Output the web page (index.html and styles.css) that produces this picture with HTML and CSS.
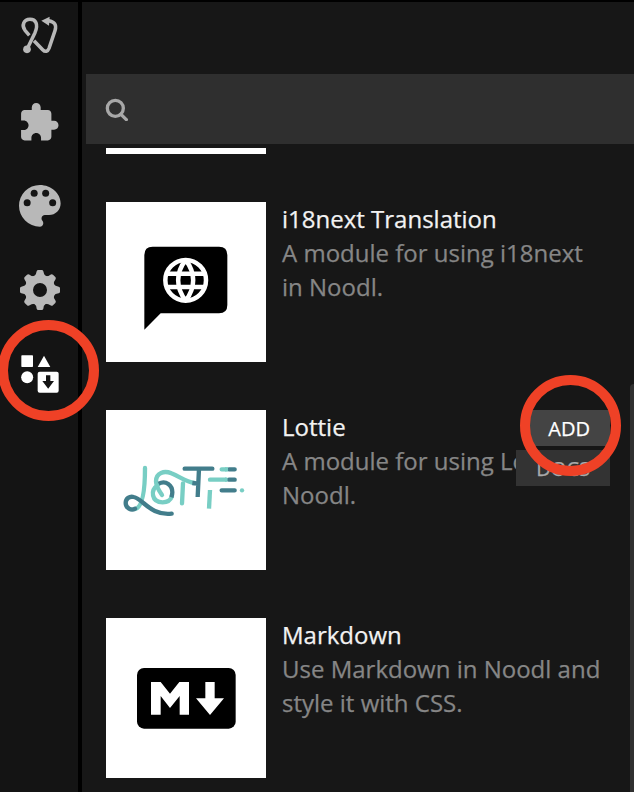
FILE: index.html
```
<!DOCTYPE html>
<html lang="en">
<head>
<meta charset="utf-8">
<title>Modules</title>
<link rel="stylesheet" href="styles.css">
</head>
<body>
<div class="app">
  <nav class="sidebar">
    <svg class="nav-icon nav-logo" viewBox="0 6 234 234">
      <g fill="none" stroke="#b8b8b8" stroke-width="10.500" stroke-linecap="butt" stroke-linejoin="round">
        <path d="M81 148L105 98C116 72 107 58 90 58C71 58 64 76 75 91L88 106"/>
        <path d="M102 122L128 149C136 157 143 155 147 145L165 92C171 73 163 65 146 62"/>
      </g>
      <circle cx="81" cy="148" r="11.5" fill="#b8b8b8"/>
      <path d="M124 62L149 50L147 77Z" fill="#b8b8b8"/>
    </svg>
    <svg class="nav-icon" viewBox="0 240 234 252">
      <path transform="translate(52.500 303.600) scale(5.35)" fill="#b8b8b8" d="M20.5 11H19V7c0-1.1-.9-2-2-2h-4V3.5C13 2.12 11.88 1 10.5 1S8 2.12 8 3.5V5H4c-1.1 0-1.99.9-1.99 2v3.8H3.5c1.49 0 2.7 1.21 2.7 2.7s-1.21 2.7-2.7 2.7H2V20c0 1.1.9 2 2 2h3.8v-1.5c0-1.49 1.21-2.7 2.7-2.7 1.49 0 2.7 1.21 2.7 2.7V22H17c1.1 0 2-.9 2-2v-4h1.5c1.38 0 2.5-1.12 2.5-2.5S21.88 11 20.5 11z"/>
    </svg>
    <svg class="nav-icon" viewBox="0 12 234 252">
      <path transform="translate(36.2 54.2) scale(6.94)" fill="#b8b8b8" d="M12 3a9 9 0 0 0 0 18c.83 0 1.5-.67 1.5-1.5 0-.39-.15-.74-.39-1.01-.23-.26-.38-.61-.38-.99 0-.83.67-1.5 1.5-1.5H16c2.76 0 5-2.24 5-5 0-4.42-4.03-8-9-8z"/>
      <g fill="#141414"><circle cx="81.5" cy="128" r="10.5"/><circle cx="102.5" cy="100" r="10.5"/><circle cx="137" cy="100" r="10.5"/><circle cx="158" cy="128" r="10.5"/></g>
    </svg>
    <svg class="nav-icon" viewBox="0 264 234 252">
      <defs><path id="tooth" d="M-18 -40Q-11 -46 -10 -56Q-9 -60 -5 -60H5Q9 -60 10 -56Q11 -46 18 -40Z"/></defs>
      <g transform="translate(120 390)" fill="#b8b8b8">
        <circle r="33.500" fill="none" stroke="#b8b8b8" stroke-width="25"/>
        <use href="#tooth"/><use href="#tooth" transform="rotate(45)"/><use href="#tooth" transform="rotate(90)"/><use href="#tooth" transform="rotate(135)"/><use href="#tooth" transform="rotate(180)"/><use href="#tooth" transform="rotate(225)"/><use href="#tooth" transform="rotate(270)"/><use href="#tooth" transform="rotate(315)"/>
      </g>
    </svg>
    <svg class="nav-icon" viewBox="0 51 234 252">
      <g fill="#fff">
        <rect x="64" y="121" width="35" height="35" rx="2"/>
        <path d="M132 122L151 156H113Z"/>
        <circle cx="81.5" cy="187" r="18"/>
        <rect x="113" y="170" width="63" height="63" rx="6"/>
      </g>
      <path d="M138 181H151V198H162L144.500 221L127 198H138Z" fill="#141414"/>
    </svg>
  </nav>

  <main class="panel">
    <div class="search">
      <svg class="search-icon" viewBox="315 291 72 72">
        <g fill="none" stroke="#a8a8a8" stroke-width="10"><circle cx="346" cy="325" r="24"/><path d="M363 343L379 359" stroke-linecap="round"/></g>
      </svg>
    </div>
    <div class="list">
      <div class="thumb thumb-cut"></div>

      <article class="item">
        <svg class="thumb" viewBox="18 21 480 480">
          <path d="M133 404V180Q133 155 158 155H357Q382 155 382 180V330Q382 355 357 355H182Z"/>
          <g fill="none" stroke="#fff" stroke-width="13.500" stroke-linejoin="bevel">
            <circle cx="257" cy="256" r="61"/>
            <path d="M202 236H312M202 276H312"/>
            <path d="M257 195C227 233 227 279 257 317C287 279 287 233 257 195Z"/>
          </g>
        </svg>
        <div class="text"><h2>i18next Translation</h2><p>A module for using i18next in Noodl.</p></div>
      </article>

      <article class="item">
        <svg class="thumb" viewBox="18 15 480 480">
          <g fill="none" stroke-width="13" stroke-linecap="round">
            <path stroke="#78cec4" d="M135 189C135 235 131 305 106 312"/>
            <path stroke="#427d8b" d="M105 311C94 318 77 309 77 294C77 280 89 273 101 276C130 282 151 333 215 326"/>
            <path stroke="#78cec4" d="M186 270C176 256 168 244 168 229C168 203 193 196 214 205C240 215 257 230 283 234"/>
            <path stroke="#78cec4" d="M174 240C150 255 154 292 188 292C202 292 212 285 216 274"/>
            <path stroke="#427d8b" stroke-linecap="butt" d="M176 236C198 225 217 241 217 262Q217 269 214 277"/>
            <path stroke="#78cec4" d="M249 235L246 295"/>
            <path stroke="#427d8b" d="M254 191H337"/>
            <path stroke="#427d8b" stroke-linecap="butt" d="M297 191L293 276M277 234L294 236"/>
            <path stroke="#78cec4" stroke-linecap="butt" d="M330 255L327 311"/>
            <path stroke="#427d8b" d="M387 193H404M387 224H404M365 256H404"/>
            <path stroke="#78cec4" d="M365 193H378M330 224H376"/>
            <path stroke="#78cec4" stroke-linecap="butt" d="M375 193H384M375 224H382"/>
          </g>
          <circle cx="426" cy="256" r="6.500" fill="#78cec4"/>
        </svg>
        <div class="text"><h2>Lottie</h2><p>A module for using Lottie in Noodl.</p></div>
        <div class="actions"><button class="btn add">ADD</button><button class="btn docs">DOCS</button></div>
      </article>

      <article class="item">
        <svg class="thumb" viewBox="18 24 480 480">
          <rect x="111" y="174" width="296" height="182" rx="21"/>
          <path fill="#fff" d="M153 314V216H182L210 251L238 216H267V314H239V258L210 294L182 258V314ZM316 216H344V265H372L330 315L288 265H316Z"/>
        </svg>
        <div class="text"><h2>Markdown</h2><p>Use Markdown in Noodl and style it with CSS.</p></div>
      </article>
    </div>
    <div class="scrollbar"></div>
  </main>
  <div class="ring ring-nav"></div>
  <div class="ring ring-add"></div>
</div>
</body>
</html>
```
FILE: styles.css
```
* { box-sizing: border-box; }
body { margin: 0; background: #000; font-family: "Open Sans", sans-serif; }
.app { position: relative; display: flex; gap: 4px; width: 634px; height: 792px; padding-top: 2px; overflow: hidden; }
.sidebar { display: flex; flex-direction: column; flex: 0 0 78px; background: #141414; }
.nav-icon { display: block; width: 78px; height: 84px; }
.nav-logo { height: 78px; }
.panel { position: relative; flex: 1; min-width: 0; padding: 72px 0 0 4px; background: #171717; }
.search { display: flex; align-items: center; height: 70px; padding-left: 19px; background: #2f2f2f; }
.search-icon { width: 24px; height: 24px; }
.list { display: flex; flex-direction: column; gap: 48px; margin-top: 4px; padding-left: 20px; }
.thumb { display: block; flex: none; width: 160px; height: 160px; background: #fff; }
.thumb-cut { height: 6px; }
.item { position: relative; display: flex; gap: 16px; height: 160px; }
.text { width: 322px; font-size: 24px; line-height: 34px; -webkit-text-stroke: 0.25px; }
h2, p { margin: 0; font: inherit; }
h2 { color: #f2f2f2; }
p { color: #868686; }
.actions { position: absolute; top: 0; right: 24px; display: flex; flex-direction: column; align-items: flex-end; gap: 4px; }
.btn { height: 36px; padding: 1px 20px 0; border: 0; font: 20px/35px "Open Sans", sans-serif; -webkit-text-stroke: 0.25px; }
.add { background: #444; color: #fff; }
.docs { background: #333; color: #aaa; }
.scrollbar { position: absolute; top: 382px; right: 0; bottom: 0; width: 4px; background: #303030; border-radius: 4px 0 0 0; }
.ring { position: absolute; width: 101px; height: 101px; border: 10px solid #ef4126; border-radius: 50%; }
.ring-nav { left: -2px; top: 320px; }
.ring-add { left: 520px; top: 375px; }
```
